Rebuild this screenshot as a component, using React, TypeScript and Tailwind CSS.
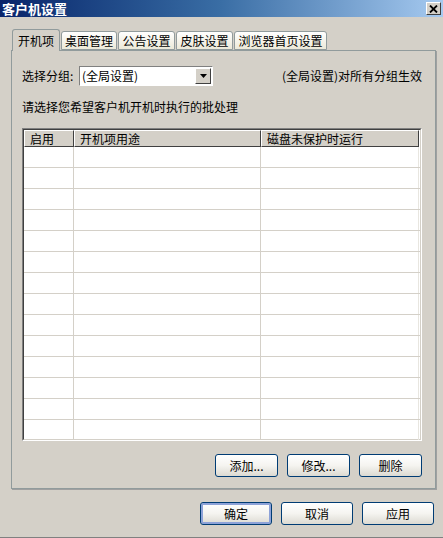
import React from "react";

const font = { fontFamily: '"Noto Sans CJK SC", "Noto Sans", sans-serif' };

const tabs: [string, string][] = [
  ["开机项", "w-[48px]"],
  ["桌面管理", "w-[56px]"],
  ["公告设置", "w-[57px]"],
  ["皮肤设置", "w-[57px]"],
  ["浏览器首页设置", "w-[93px]"],
];
const rows = Array.from({ length: 14 });

function XpButton({ label, def, w }: { label: string; def?: boolean; w: string }) {
  return (
    <button
      className={`${w} h-[23px] rounded-[3px] border border-[#003c74] bg-gradient-to-b from-[#ffffff] via-[#f5f4f0] to-[#dcdad2] text-[12px] text-black leading-none flex items-center justify-center ${
        def ? "shadow-[inset_0_0_0_2px_#8da2d8]" : ""
      }`}
    >
      {label}
    </button>
  );
}

export default function App() {
  return (
    <div
      className="w-[443px] h-[538px] bg-[#d4d0c8] flex flex-col border-b border-[#808080] text-[12px] text-black"
      style={font}
    >
      {/* 标题栏 */}
      <div className="h-[17px] flex items-center justify-between bg-gradient-to-r from-[#0a246a] via-[#3a6ea5] to-[#a6caf0] pl-[2px] pr-[2px]">
        <span className="text-white font-bold text-[13px] leading-none">客户机设置</span>
        <div className="w-[15px] h-[13px] bg-[#d4d0c8] border border-t-white border-l-white border-r-[#404040] border-b-[#404040] flex items-center justify-center">
          <svg width="9" height="8" viewBox="0 0 9 8">
            <path d="M1 0.5 L8 7.5 M8 0.5 L1 7.5" stroke="#000" strokeWidth="1.8" />
          </svg>
        </div>
      </div>

      <div className="pl-[11px] pt-[12px] w-[436px]">
        {/* 标签页 */}
        <div className="flex items-end h-[22px] pl-[1px] gap-[1px] relative z-10">
          {tabs.map(([t, w], i) =>
            i === 0 ? (
              <div
                key={t}
                className={`${w} h-[22px] border border-b-0 border-[#919b9c] rounded-t-[3px] bg-[#d4d0c8] flex items-center justify-center text-[12px]`}
              >
                {t}
              </div>
            ) : (
              <div
                key={t}
                className={`${w} h-[19px] mb-[1px] border border-[#919b9c] rounded-t-[3px] bg-gradient-to-b from-white to-[#ece9d8] flex items-center justify-center text-[12px]`}
              >
                {t}
              </div>
            )
          )}
        </div>

        {/* 面板 */}
        <div className="-mt-[1px] h-[439px] border border-[#919b9c] shadow-[1px_1px_0_#a0a0a0] pl-[10px] pr-[13px] flex flex-col">
          <div className="flex items-center justify-between mt-[15px] h-[20px]">
            <div className="flex items-center">
              <span className="w-[57px]">选择分组:</span>
              <div className="w-[134px] h-[20px] bg-white border border-t-[#808080] border-l-[#808080] border-r-white border-b-white flex items-center">
                <span className="flex-1 pl-[2px] leading-none">(全局设置)</span>
                <div className="w-[16px] h-[16px] mr-[1px] bg-[#d4d0c8] border border-t-white border-l-white border-r-[#404040] border-b-[#404040] flex items-center justify-center">
                  <svg width="7" height="4" viewBox="0 0 7 4">
                    <path d="M0 0 H7 L3.5 4 Z" fill="#000" />
                  </svg>
                </div>
              </div>
            </div>
            <span>(全局设置)对所有分组生效</span>
          </div>

          <div className="mt-[12px] h-[18px] flex items-center">请选择您希望客户机开机时执行的批处理</div>

          {/* 表格 */}
          <div className="mt-[12px] w-[400px] h-[313px] bg-white border border-t-[#808080] border-l-[#808080] border-r-white border-b-white overflow-hidden">
            <div className="h-full border border-t-[#404040] border-l-[#404040] border-r-[#d4d0c8] border-b-[#d4d0c8] flex flex-col">
              <div className="flex h-[17px] shrink-0">
                {[
                  ["启用", "w-[50px]"],
                  ["开机项用途", "w-[187px]"],
                  ["磁盘未保护时运行", "w-[158px]"],
                ].map(([h, w]) => (
                  <div
                    key={h}
                    className={`${w} bg-[#d4d0c8] border border-t-white border-l-white border-r-[#404040] border-b-[#404040] pl-[5px] flex items-center leading-none text-[12px]`}
                  >
                    {h}
                  </div>
                ))}
              </div>
              {rows.map((_, i) => (
                <div key={i} className="flex h-[21px] shrink-0 border-b border-[#d4d0c8]">
                  <div className="w-[50px] border-r border-[#d4d0c8]" />
                  <div className="w-[187px] border-r border-[#d4d0c8]" />
                  <div className="w-[158px] border-r border-[#e8e6e0]" />
                </div>
              ))}
            </div>
          </div>

          <div className="flex justify-end gap-[9px] mt-[13px]">
            <XpButton label="添加..." w="w-[63px]" />
            <XpButton label="修改..." w="w-[63px]" />
            <XpButton label="删除" w="w-[63px]" />
          </div>
        </div>

        <div className="flex justify-end gap-[9px] mt-[13px] pr-[2px]">
          <XpButton label="确定" w="w-[72px]" def />
          <XpButton label="取消" w="w-[72px]" />
          <XpButton label="应用" w="w-[72px]" />
        </div>
      </div>
    </div>
  );
}
